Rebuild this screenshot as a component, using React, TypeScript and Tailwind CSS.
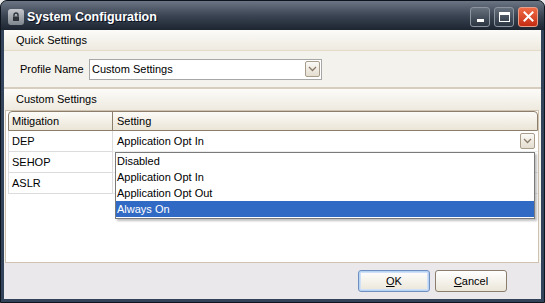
import React from "react";

const Chevron = () => (
  <svg width="9" height="6" viewBox="0 0 9 6" className="block">
    <path d="M1 1 L4.5 4.5 L8 1" fill="none" stroke="#8a7a68" strokeWidth="1.3" />
  </svg>
);

const DropBtn = () => (
  <div className="w-[15px] h-[16px] rounded-[2px] border border-[#a89c8a] bg-gradient-to-b from-[#fbfaf7] to-[#e4ddcf] flex items-center justify-center">
    <Chevron />
  </div>
);

export default function App() {
  return (
    <div className="w-[545px] h-[303px] bg-[#e8e8e8] text-[11px] text-black" style={{ fontFamily: '"Liberation Sans", Arial, sans-serif' }}>
      <div className="w-full h-full rounded-t-[7px] bg-[#33435a] border border-[#0f151e] flex flex-col overflow-hidden">
        {/* Title bar */}
        <div className="h-[29px] shrink-0 flex items-center bg-gradient-to-b from-[#6b7583] via-[#3b4553] to-[#1d2531] pl-[7px] pr-[6px]">
          <div className="mt-[2px] w-[16px] h-[16px] rounded-[3px] bg-gradient-to-b from-[#c5c9ce] to-[#80868e] flex items-center justify-center">
            <svg width="10" height="10" viewBox="0 0 10 10">
              <path d="M3 4.5 V3 a2 2 0 0 1 4 0 V4.5" fill="none" stroke="#2e333a" strokeWidth="1.4" />
              <rect x="2" y="4.5" width="6" height="4.5" fill="#2e333a" />
            </svg>
          </div>
          <div className="ml-[3px] mt-[3px] text-white font-bold text-[12.5px]" style={{ textShadow: "1px 1px 0 #0a1020" }}>
            System Configuration
          </div>
          <div className="ml-auto mt-[2px] flex gap-[4px]">
            <div className="w-[20px] h-[20px] rounded-[3px] border border-[#8b949f] bg-gradient-to-b from-[#67717e] to-[#2c3542] flex items-end justify-center pb-[4px]">
              <div className="w-[7px] h-[3px] bg-white" />
            </div>
            <div className="w-[20px] h-[20px] rounded-[3px] border border-[#8b949f] bg-gradient-to-b from-[#67717e] to-[#2c3542] flex items-center justify-center">
              <div className="w-[11px] h-[10px] border border-white border-t-[3px]" />
            </div>
            <div className="w-[20px] h-[20px] rounded-[3px] border border-[#e9a08a] bg-gradient-to-b from-[#f06a45] to-[#c52a0f] flex items-center justify-center">
              <svg width="11" height="11" viewBox="0 0 11 11">
                <path d="M1.5 1.5 L9.5 9.5 M9.5 1.5 L1.5 9.5" stroke="white" strokeWidth="2" strokeLinecap="square" />
              </svg>
            </div>
          </div>
        </div>

        {/* Client area */}
        <div className="flex-1 mx-[3px] mb-[3px] flex flex-col bg-[#f4f2ec]">
          <div className="h-[21px] shrink-0 border-b border-[#e3dac8] bg-gradient-to-b from-[#fcfbf8] to-[#eeeae0] flex items-center pl-[12px]">
            Quick Settings
          </div>
          <div className="h-[36px] shrink-0 flex items-center pl-[16px] bg-[#f4f2ec]">
            <span className="w-[69px]">Profile Name</span>
            <div className="w-[233px] h-[21px] border border-[#a7a7a7] bg-white flex items-center pl-[2px] pr-[1px]">
              <span className="flex-1">Custom Settings</span>
              <DropBtn />
            </div>
          </div>
          <div className="h-[2px] shrink-0 bg-[#d6cdbe]" />
          <div className="h-[21px] shrink-0 bg-gradient-to-b from-[#fcfbf8] to-[#eeeae0] flex items-center pl-[12px]">
            Custom Settings
          </div>

          {/* Grid */}
          <div className="relative flex-1 ml-px mr-[2px] border border-[#cfc3b0] bg-white pl-[2px] flex flex-col">
            <div className="h-[20px] shrink-0 flex border border-[#8c7e6c] rounded-t-[4px] bg-gradient-to-b from-[#fcfbf7] to-[#ebe5d7]">
              <div className="w-[104px] border-r border-[#8c7e6c] flex items-center pl-[3px]">Mitigation</div>
              <div className="flex-1 flex items-center pl-[4px]">Setting</div>
            </div>
            {[
              ["DEP", true],
              ["SEHOP", false],
              ["ASLR", false],
            ].map(([name, active]) => (
              <div key={name as string} className="h-[21px] shrink-0 flex">
                <div className="w-[105px] border-l border-r border-b border-[#dcdcdc] flex items-center pl-[3px]">{name}</div>
                <div className="flex-1 flex items-center pl-[4px] pr-[3px] border-b border-[#ececec]">
                  {active ? (
                    <>
                      <span className="flex-1">Application Opt In</span>
                      <DropBtn />
                    </>
                  ) : null}
                </div>
              </div>
            ))}

            {/* Dropdown list overlay */}
            <div className="absolute left-[109px] top-[41px] w-[420px] border border-[#7a7a7a] bg-white shadow-[2px_2px_2px_rgba(0,0,0,0.25)] pb-px">
              <div className="h-[16px] flex items-center pl-[1px]">Disabled</div>
              <div className="h-[16px] flex items-center pl-[1px]">Application Opt In</div>
              <div className="h-[16px] flex items-center pl-[1px]">Application Opt Out</div>
              <div className="h-[16px] flex items-center pl-[1px] bg-[#316ac5] text-white">Always On</div>
            </div>
          </div>

          {/* Bottom buttons */}
          <div className="h-[36px] shrink-0 bg-[#ebe8eb] flex justify-end items-start pt-[7px] pr-[34px] gap-[5px]">
            <button className="w-[72px] h-[22px] rounded-[3px] border border-[#6f8fbf] bg-gradient-to-b from-white to-[#ebe6d8] shadow-[inset_0_0_0_1px_#b9d3f5,inset_0_0_0_2px_#cfe0f8] flex items-center justify-center">
              <span><u>O</u>K</span>
            </button>
            <button className="w-[72px] h-[22px] rounded-[3px] border border-[#8a7d6c] bg-gradient-to-b from-white to-[#ebe6d8] flex items-center justify-center">
              <span><u>C</u>ancel</span>
            </button>
          </div>
        </div>
      </div>
    </div>
  );
}
